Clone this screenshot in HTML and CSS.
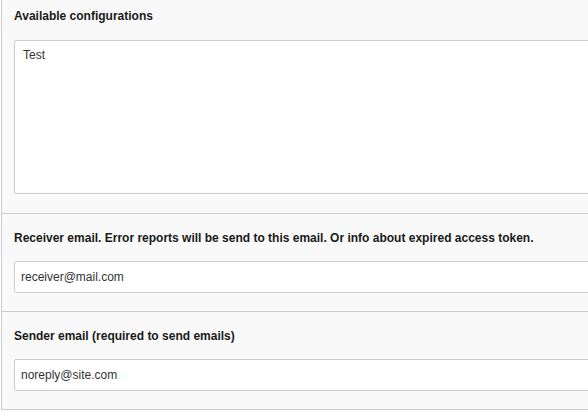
FILE: index.html
```html
<!DOCTYPE html>
<html>
<head>
<meta charset="utf-8">
<link rel="stylesheet" href="styles.css">
</head>
<body>
<div class="panel">
  <div class="section first">
    <label class="label">Available configurations</label>
    <div class="textarea">Test</div>
  </div>
  <div class="section">
    <label class="label">Receiver email. Error reports will be send to this email. Or info about expired access token.</label>
    <div class="input">receiver@mail.com</div>
  </div>
  <div class="section">
    <label class="label">Sender email (required to send emails)</label>
    <div class="input">noreply@site.com</div>
  </div>
</div>
</body>
</html>
```
FILE: styles.css
```css
html, body {
  margin: 0;
  padding: 0;
  background: #ffffff;
  overflow: hidden;
}
body {
  font-family: "Liberation Sans", Arial, sans-serif;
  font-size: 12px;
  width: 588px;
  height: 416px;
}
.panel {
  margin-left: 1px;
  width: 700px;
  background: #f9f9f9;
  border-left: 1px solid #cccccc;
  border-bottom: 1px solid #cccccc;
}
.section {
  display: flex;
  flex-direction: column;
  gap: 14px;
  padding: 15px 0 18px 12px;
  border-top: 1px solid #cccccc;
}
.section.first {
  border-top: none;
  padding-top: 7px;
  padding-bottom: 19px;
  gap: 15px;
}
.label {
  font-weight: bold;
  color: #1a1a1a;
  line-height: 18px;
}
.textarea {
  height: 154px;
  box-sizing: border-box;
  background: #ffffff;
  border: 1px solid #cccccc;
  border-radius: 2px;
  padding: 7px 8px;
  color: #333333;
  line-height: 14px;
}
.input {
  height: 32px;
  box-sizing: border-box;
  background: #ffffff;
  border: 1px solid #cccccc;
  border-radius: 2px;
  padding: 0 6px;
  color: #333333;
  line-height: 30px;
}
```
